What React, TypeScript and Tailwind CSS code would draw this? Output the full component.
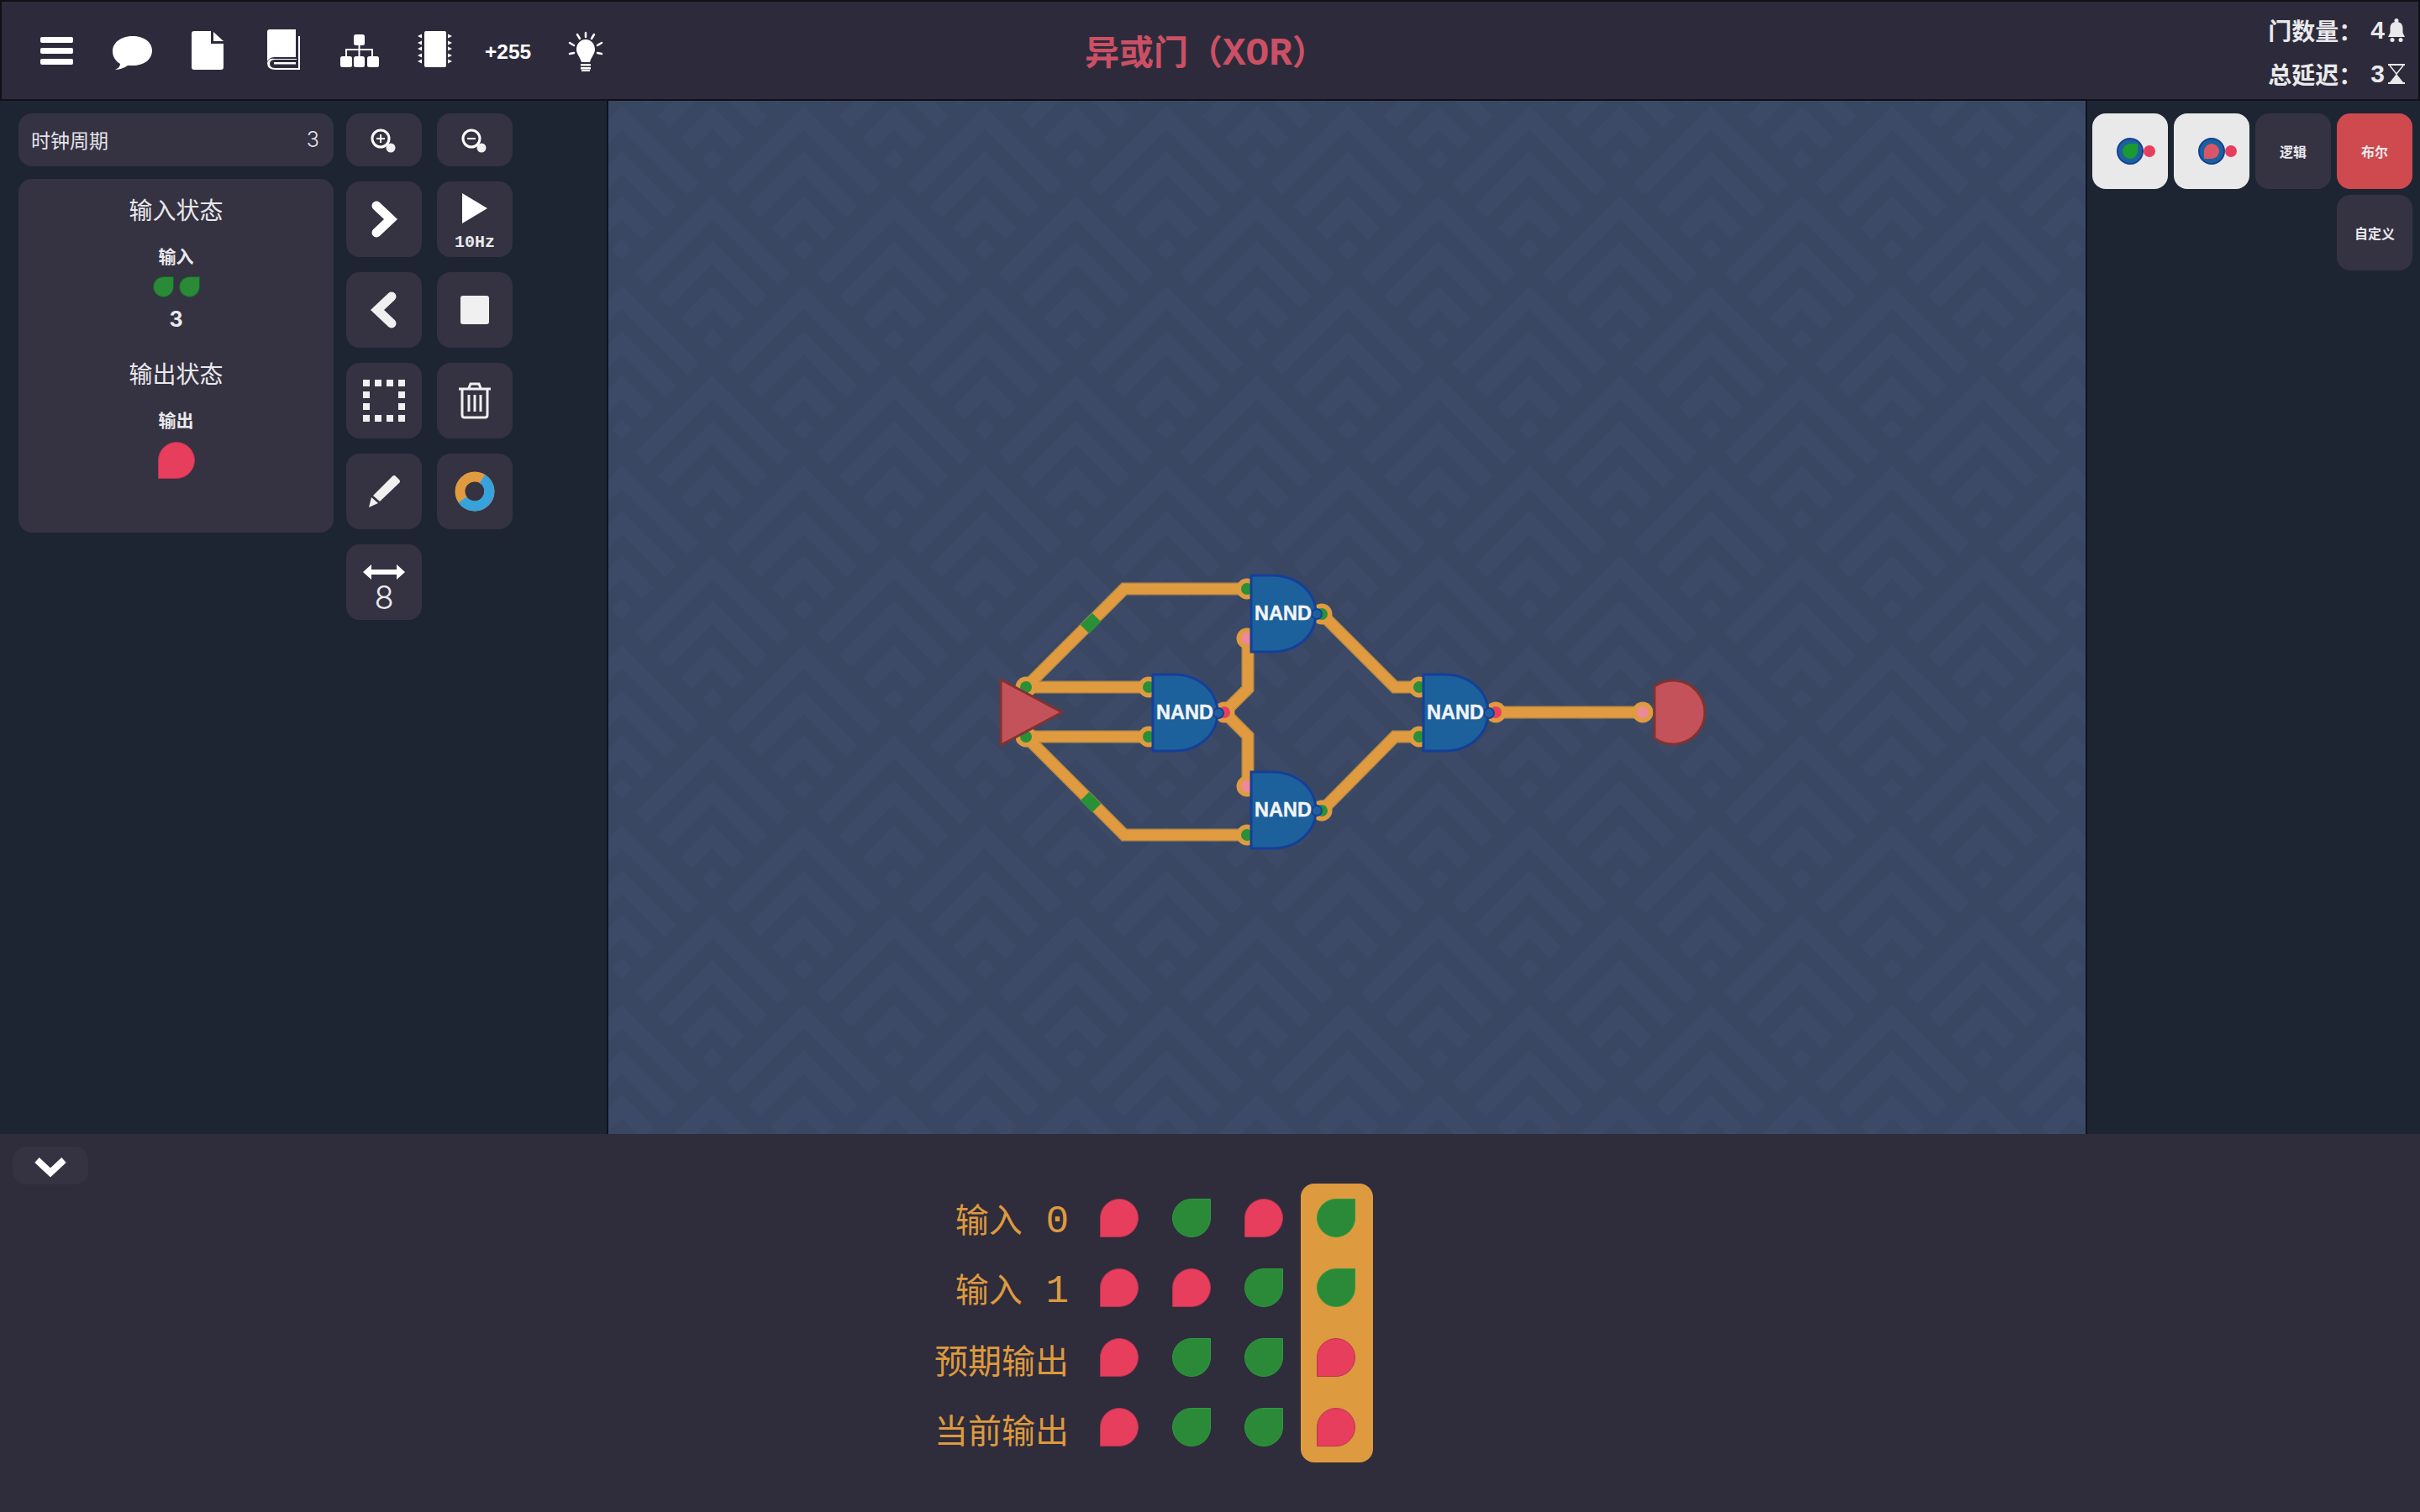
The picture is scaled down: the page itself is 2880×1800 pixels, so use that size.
const cjk = "font-['Noto_Sans_CJK_SC','Liberation_Sans',sans-serif]"
const mono = "font-['Liberation_Mono','Noto_Sans_CJK_SC',monospace]"

const tileCenters: [number, number][] = []
for (const i of [-1, 0, 1]) {
  for (const j of [0, 1, 2]) {
    tileCenters.push([54 + i * 216, 53 + j * 214 - 214])
    tileCenters.push([162 + i * 216, 160 + j * 214 - 214])
  }
}

const wires = [
  '1221,818 1338,701 1484,701',
  '1221,818 1367,818',
  '1221,877 1367,877',
  '1221,877 1338,994 1484,994',
  '1457,848 1485,820 1485,760',
  '1457,848 1485,876 1485,936',
  '1573,731 1660,818 1689,818',
  '1573,965 1660,877 1689,877',
  '1780,848 1955,848',
]

const pins: [number, number, string][] = [
  [1221, 818, '#2a9038'],
  [1221, 877, '#2a9038'],
  [1367, 818, '#2a9038'],
  [1367, 877, '#2a9038'],
  [1484, 701, '#2a9038'],
  [1484, 760, '#ec8a99'],
  [1484, 936, '#ec8a99'],
  [1484, 994, '#2a9038'],
  [1689, 818, '#2a9038'],
  [1689, 877, '#2a9038'],
  [1573, 731, '#2a9038'],
  [1573, 965, '#2a9038'],
  [1457, 848, '#e83e5e'],
  [1780, 848, '#e83e5e'],
  [1955, 848, '#ec8a99'],
]

const gates: [number, number][] = [
  [1489, 685],
  [1372, 803],
  [1489, 919],
  [1694, 803],
]

function Circuit() {
  return (
    <svg viewBox="724 120 1758 1230" className="block w-full h-full">
      <defs>
        <pattern id="chevrons" patternUnits="userSpaceOnUse" x="794" y="137" width="216" height="214">
          <rect width="216" height="214" fill="#394762" />
          {tileCenters.map(([cx, cy]) => (
            <g key={`${cx}-${cy}`} fill="none" stroke="#3c4a68" strokeWidth="19">
              <polyline points={`${cx - 31},${cy - 19} ${cx},${cy - 50} ${cx + 31},${cy - 19}`} />
              <polyline points={`${cx - 58},${cy - 45} ${cx},${cy - 103} ${cx + 58},${cy - 45}`} />
              <polyline points={`${cx - 85},${cy - 72} ${cx},${cy - 157} ${cx + 85},${cy - 72}`} />
              <polygon points={`${cx},${cy - 12} ${cx + 12},${cy} ${cx},${cy + 12} ${cx - 12},${cy}`} fill="#3c4a68" stroke="none" />
            </g>
          ))}
        </pattern>
      </defs>
      <rect x="724" y="120" width="1758" height="1230" fill="url(#chevrons)" />

      {/* wires */}
      {wires.map(w => (
        <polyline key={w} points={w} fill="none" stroke="#b98a45" strokeWidth="15" />
      ))}
      {wires.map(w => (
        <polyline key={w} points={w} fill="none" stroke="#e09b40" strokeWidth="12" />
      ))}
      <rect x="-10" y="-7.5" width="20" height="15" fill="#2a9038" transform="translate(1298 742) rotate(-45)" />
      <rect x="-10" y="-7.5" width="20" height="15" fill="#2a9038" transform="translate(1298 955) rotate(45)" />

      {/* pins */}
      {pins.map(([x, y, c]) => (
        <g key={`${x}-${y}`}>
          <circle cx={x} cy={y} r="12.5" fill="#e09b40" />
          <circle cx={x} cy={y} r="7" fill={c} />
        </g>
      ))}

      {/* input */}
      <polygon points="1191,809 1191,887 1264,848" fill="#c4525a" stroke="#7e3330" strokeWidth="3" />

      {/* gates */}
      {gates.map(([x, y]) => (
        <g key={`${x}-${y}`} transform={`translate(${x} ${y})`}>
          <path d="M0 0 H25 C55 0 77 20 77 45.5 C77 71 55 91 25 91 H0 Z" fill="#1c619c" stroke="#153f97" strokeWidth="3" />
          <circle cx="78" cy="46" r="6" fill="#1c619c" stroke="#153f97" strokeWidth="2" />
          <text x="38" y="53" textAnchor="middle" fill="#f2f4f7" stroke="#f2f4f7" strokeWidth="0.4" fontSize="23.5" fontWeight="700" fontFamily="Liberation Sans, sans-serif">
            NAND
          </text>
        </g>
      ))}

      {/* output */}
      <path d="M1969 817 A38 38 0 1 1 1969 879 Z" fill="#c4525a" stroke="#7e3330" strokeWidth="3" />
    </svg>
  )
}

function TopIcons() {
  return (
    <svg width="740" height="116" viewBox="0 0 740 116" className="block shrink-0" fill="#fff">
      {/* menu */}
      <rect x="46" y="42" width="39" height="7" rx="2" />
      <rect x="46" y="55" width="39" height="7" rx="2" />
      <rect x="46" y="68" width="39" height="7" rx="2" />
      {/* comment */}
      <path d="M156 41 C143 41 132 48 132 59 C132 66 136 71 141 74 C141 77 139 79 135 81 C141 81 147 78 150 76 L156 76 C169 76 179 69 179 58 C179 48 169 41 156 41 Z" />
      {/* file */}
      <path d="M229 35 H249 V50 H264 V78 Q264 81 261 81 H229 Q226 81 226 78 V38 Q226 35 229 35 Z" />
      <path d="M252 36 L264 47 H252 Z" />
      {/* book */}
      <path d="M319 33 H350 V66 H325 Q319 66 316 71 V36 Q316 33 319 33 Z" />
      <path d="M353 41 H355 V81 H326 Q316 81 316 73 Q317 67 325 68 H351 V69 H326 Q319 69 319 74 Q319 79 326 79 H353 Z" />
      <rect x="324" y="72" width="26" height="2.5" />
      {/* sitemap */}
      <rect x="419" y="39" width="13" height="13" rx="2.5" />
      <path d="M424.5 52 H426.5 V56 H442 V65 H440 V58 H426.5 V65 H424.5 V58 H411 V65 H409 V56 H424.5 Z" />
      <rect x="403" y="65" width="14" height="13" rx="2.5" />
      <rect x="419" y="65" width="13" height="13" rx="2.5" />
      <rect x="435" y="65" width="14" height="13" rx="2.5" />
      {/* chip */}
      <rect x="503" y="35" width="26" height="43" rx="2" />
      {[41, 49, 56, 64, 71].map(y => (
        <g key={y}>
          <path d={`M495 ${y} L500 ${y - 2.5} V${y + 2.5} Z`} />
          <path d={`M536 ${y} L531 ${y - 2.5} V${y + 2.5} Z`} />
        </g>
      ))}
      {/* bulb */}
      <path d="M695 45 C688 45 684 51 684 57 C684 62 689 67 690 72 H700 C701 67 706 62 706 57 C706 51 702 45 695 45 Z" />
      <rect x="689" y="74" width="12" height="2.5" />
      <rect x="689" y="78" width="12" height="2.5" />
      <rect x="690" y="81" width="10" height="2" />
      <g stroke="#fff" strokeWidth="2.5" strokeLinecap="round">
        <line x1="695" y1="37" x2="695" y2="42" />
        <line x1="685" y1="39" x2="688" y2="44" />
        <line x1="705" y1="39" x2="702" y2="44" />
        <line x1="676" y1="49" x2="681" y2="52" />
        <line x1="714" y1="49" x2="709" y2="52" />
        <line x1="676" y1="62" x2="681" y2="61" />
        <line x1="714" y1="62" x2="709" y2="61" />
      </g>
      <text x="575" y="68" fill="#fff" fontSize="24.5" fontWeight="700" fontFamily="Liberation Sans, sans-serif">
        +255
      </text>
    </svg>
  )
}

function Leaf({ on, size = 'w-[46px] h-[46px]' }: { on: boolean; size?: string }) {
  return on ? (
    <div className={`${size} bg-[#2a8a38] border border-[#2f9a3f] rounded-full rounded-tr-none`} />
  ) : (
    <div className={`${size} bg-[#e83e5e] border border-[#b93450] rounded-full rounded-bl-none`} />
  )
}

function ToolButton({ className = 'h-[90px]', children }: { className?: string; children?: React.ReactNode }) {
  return <div className={`flex flex-col items-center justify-center rounded-2xl bg-[#353242] ${className}`}>{children}</div>
}

const rows: [string, string, boolean[]][] = [
  ['输入', ' 0', [false, true, false, true]],
  ['输入', ' 1', [false, false, true, true]],
  ['预期输出', '', [false, true, true, false]],
  ['当前输出', '', [false, true, true, false]],
]

export default function App() {
  return (
    <div className={`flex flex-col w-[2880px] h-[1800px] overflow-hidden bg-[#1d2533] text-[#e9e9ec] ${cjk}`}>
      {/* Top bar */}
      <header className="flex items-center shrink-0 h-[120px] border-2 border-[#101018] bg-[#2d2b3b]">
        <div className="w-[1289px] shrink-0">
          <TopIcons />
        </div>
        <h1 className="text-[41px] leading-none font-bold text-[#cc5065] mt-[7px] whitespace-nowrap">
          异或门（<span className={`text-[46px] ${mono}`}>XOR</span>）
        </h1>
        <div className="ml-auto flex flex-col gap-[12px] pr-[16px] pt-[3px] text-[28px] leading-[40px] font-bold">
          <div className="flex items-center justify-end">
            <span>门数量：</span>
            <span className="ml-[10px] font-['Liberation_Sans',sans-serif] text-[30px]">4</span>
            <svg width="20" height="28" viewBox="0 0 20 28" className="ml-[4px]" fill="#e9e9ec">
              <circle cx="10" cy="2.5" r="2.5" />
              <path d="M10 4 C4 4 2.5 8 2.5 12 V17 L0 22 H20 L17.5 17 V12 C17.5 8 16 4 10 4 Z" />
              <circle cx="5" cy="25.5" r="2.5" />
              <circle cx="15" cy="25.5" r="2.5" />
            </svg>
          </div>
          <div className="flex items-center justify-end">
            <span>总延迟：</span>
            <span className="ml-[10px] font-['Liberation_Sans',sans-serif] text-[30px]">3</span>
            <svg width="20" height="24" viewBox="0 0 20 24" className="ml-[4px]" fill="#e9e9ec">
              <rect width="20" height="2" />
              <rect y="22" width="20" height="2" />
              <path d="M2 2 L10 12 L18 2" fill="none" stroke="#e9e9ec" strokeWidth="1.5" />
              <path d="M10 12 L18 22 H2 Z" />
            </svg>
          </div>
        </div>
      </header>

      <main className="flex flex-1 min-h-0">
        {/* Left sidebar */}
        <aside className="flex items-start gap-[15px] w-[722px] shrink-0 pl-[22px] pt-[15px]">
          <div className="flex flex-col gap-[15px] w-[375px]">
            <div className="flex items-center justify-between h-[63px] rounded-2xl bg-[#353242] pl-[15px] pr-[17px] text-[23px] text-[#e4e4e8]">
              <span>时钟周期</span>
              <span className="font-['Inter',sans-serif] font-light text-[25px] mt-[1px]">3</span>
            </div>
            <div className="flex flex-col items-center h-[421px] rounded-2xl bg-[#353242] pt-[16px]">
              <div className="text-[28px] leading-[40px]">输入状态</div>
              <div className="mt-[20px] text-[21px] leading-[30px] font-bold">输入</div>
              <div className="flex gap-[6px] mt-[10px]">
                <Leaf on size="w-[25px] h-[25px] !border-[#17602a]" />
                <Leaf on size="w-[25px] h-[25px] !border-[#17602a]" />
              </div>
              <div className="mt-[11px] text-[25px] leading-[30px] font-bold font-['Inter',sans-serif]">3</div>
              <div className="mt-[29px] text-[28px] leading-[40px]">输出状态</div>
              <div className="mt-[20px] text-[21px] leading-[30px] font-bold">输出</div>
              <div className="mt-[12px]">
                <Leaf on={false} size="w-[44px] h-[44px]" />
              </div>
            </div>
          </div>

          <div className="grid grid-cols-[90px_90px] gap-x-[18px] gap-y-[18px]">
            <ToolButton className="h-[63px]">
              <svg width="36" height="30" viewBox="0 0 36 30" fill="none" stroke="#fff" strokeWidth="3">
                <circle cx="14" cy="13" r="10" />
                <path d="M14 8 V18 M9 13 H19" strokeWidth="2" />
                <circle cx="26" cy="24" r="5.5" fill="#f0f0f0" stroke="none" />
              </svg>
            </ToolButton>
            <ToolButton className="h-[63px]">
              <svg width="36" height="30" viewBox="0 0 36 30" fill="none" stroke="#fff" strokeWidth="3">
                <circle cx="14" cy="13" r="10" />
                <path d="M9 13 H19" strokeWidth="2" />
                <circle cx="26" cy="24" r="5.5" fill="#f0f0f0" stroke="none" />
              </svg>
            </ToolButton>
            <ToolButton>
              <svg width="32" height="44" viewBox="0 0 32 44" fill="none" stroke="#fff" strokeWidth="11" strokeLinecap="round" strokeLinejoin="miter">
                <path d="M7 6 L24 22 L7 38" />
              </svg>
            </ToolButton>
            <ToolButton className="h-[90px] !justify-start pt-[14px]">
              <svg width="30" height="36" viewBox="0 0 30 36" fill="#fff">
                <path d="M0 0 L30 18 L0 36 Z" />
              </svg>
              <span className={`text-[20px] leading-[24px] font-bold mt-[11px] ${mono}`}>10Hz</span>
            </ToolButton>
            <ToolButton>
              <svg width="32" height="44" viewBox="0 0 32 44" fill="none" stroke="#f0f0f0" strokeWidth="11" strokeLinecap="round">
                <path d="M25 6 L8 22 L25 38" />
              </svg>
            </ToolButton>
            <ToolButton>
              <div className="w-[34px] h-[34px] rounded-[3px] bg-[#f0f0f0]" />
            </ToolButton>
            <ToolButton>
              <svg width="50" height="50" viewBox="0 0 50 50" fill="#f0f0f0">
                {[0, 14, 28, 42].map(x =>
                  [0, 14, 28, 42].map(y =>
                    x === 0 || x === 42 || y === 0 || y === 42 ? <rect key={`${x}-${y}`} x={x} y={y} width="8" height="8" /> : null
                  )
                )}
              </svg>
            </ToolButton>
            <ToolButton>
              <svg width="40" height="44" viewBox="0 0 40 44" fill="none" stroke="#f0f0f0" strokeWidth="3">
                <path d="M1 8 H39 M13 7 L15 2 H25 L27 7" />
                <path d="M5 8 V39 Q5 42 8 42 H32 Q35 42 35 39 V8" />
                <path d="M13 15 V35 M20 15 V35 M27 15 V35" />
              </svg>
            </ToolButton>
            <ToolButton>
              <svg width="40" height="40" viewBox="0 0 40 40" fill="#f0f0f0">
                <path d="M30 2 Q32 0 34 2 L38 6 Q40 8 38 10 L15 32 L7 25 Z" />
                <path d="M5 27 L13 34 L2 39 Z" />
              </svg>
            </ToolButton>
            <ToolButton>
              <svg width="48" height="48" viewBox="0 0 48 48" fill="none" strokeWidth="12">
                <circle cx="24" cy="24" r="17.5" stroke="#e09b40" />
                <path d="M33 9 A17.5 17.5 0 1 1 9.5 34" stroke="#36a3dc" />
              </svg>
            </ToolButton>
            <ToolButton className="h-[90px] !justify-start pt-[24px]">
              <svg width="50" height="18" viewBox="0 0 50 18" fill="#fff">
                <path d="M0 9 L10 0 V6 H40 V0 L50 9 L40 18 V12 H10 V18 Z" />
              </svg>
              <span className="text-[38px] leading-[38px] mt-[2px] font-light font-['Inter',sans-serif]">8</span>
            </ToolButton>
          </div>
        </aside>

        {/* Canvas */}
        <section className="w-[1762px] shrink-0 border-x-2 border-[#0e131d]">
          <Circuit />
        </section>

        {/* Right sidebar */}
        <aside className="flex-1 pt-[15px] pl-[6px] text-[16px] font-bold">
          <div className="grid grid-cols-[90px_90px_90px_90px] gap-x-[7px] gap-y-[7px]">
            <div className="flex items-center justify-center h-[90px] rounded-2xl bg-[#e9e9e9]">
              <svg width="64" height="40" viewBox="8 0 64 40" className="shrink-0">
                <g transform="translate(20 0)">
                  <circle cx="20" cy="20" r="15" fill="#1c619c" stroke="#153f97" strokeWidth="2" />
                  <path d="M20 11 A9 9 0 1 0 29 20 V11 Z" fill="#1b9a33" />
                  <circle cx="43" cy="20" r="7" fill="#e83e5e" />
                </g>
              </svg>
            </div>
            <div className="flex items-center justify-center h-[90px] rounded-2xl bg-[#e9e9e9]">
              <svg width="64" height="40" viewBox="8 0 64 40" className="shrink-0">
                <g transform="translate(20 0)">
                  <circle cx="20" cy="20" r="15" fill="#1c619c" stroke="#153f97" strokeWidth="2" />
                  <path d="M20 29 A9 9 0 1 0 11 20 V29 Z" fill="#d9566a" />
                  <circle cx="43" cy="20" r="7" fill="#e83e5e" />
                </g>
              </svg>
            </div>
            <div className="flex items-center justify-center h-[90px] rounded-2xl bg-[#353242]">逻辑</div>
            <div className="flex items-center justify-center h-[90px] rounded-2xl bg-[#cf4a4f]">布尔</div>
            <div className="flex items-center justify-center h-[90px] rounded-2xl bg-[#353242] col-start-4">自定义</div>
          </div>
        </aside>
      </main>

      {/* Truth table */}
      <footer className="relative shrink-0 h-[450px] bg-[#2f2c3c]">
        <div className="absolute left-[15px] top-[15px] flex items-center justify-center w-[90px] h-[45px] rounded-2xl bg-[#353242]">
          <svg width="38" height="26" viewBox="0 0 38 26" fill="none" stroke="#fff" strokeWidth="8" className="mt-[2px]">
            <path d="M3 5 L19 20 L35 5" />
          </svg>
        </div>
        <div className="relative ml-[1100px] pt-[59px] w-[540px]">
          <div className="absolute left-[448px] top-[59px] w-[86px] h-[332px] rounded-2xl bg-[#dd9a3e]" />
          {rows.map(([label, num, cells], r) => (
            <div key={r} className="relative flex items-center h-[83px]">
              <div className={`w-[172px] text-right text-[40px] leading-none text-[#dd9a3e] whitespace-pre ${num ? 'pt-[7px]' : 'pt-[3px]'}`}>
                {label}
                {num && <span className={`text-[46px] leading-none ${mono}`}>{num}</span>}
              </div>
              <div className="flex ml-[17px] mt-[-2px]">
                {cells.map((on, i) => (
                  <div key={i} className="flex items-center justify-center w-[86px]">
                    <Leaf on={on} />
                  </div>
                ))}
              </div>
            </div>
          ))}
        </div>
      </footer>
    </div>
  )
}
